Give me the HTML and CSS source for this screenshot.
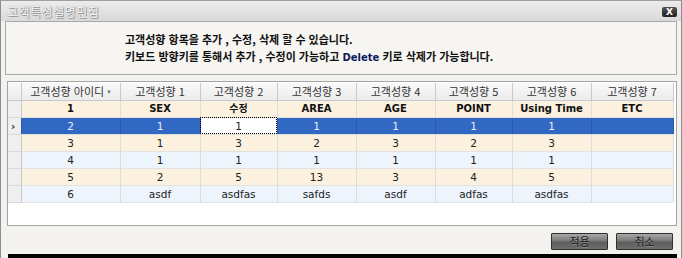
FILE: index.html
```html
<!DOCTYPE html>
<html lang="ko">
<head>
<meta charset="utf-8">
<link rel="stylesheet" href="styles.css">
</head>
<body>
<div class="window">
  <div class="titlebar">
    <span class="title">고객특성설명편집</span>
    <span class="close">X</span>
  </div>
  <div class="content">
    <div class="info">
      <p>고객성향 항목을 추가 , 수정, 삭제 할 수 있습니다.</p>
      <p>키보드 방향키를 통해서 추가 , 수정이 가능하고 <span class="kw">Delete</span> 키로 삭제가 가능합니다.</p>
    </div>
    <div class="grid">
      <table>
        <colgroup>
          <col class="c-rh"><col class="c0"><col class="c1"><col class="c2"><col class="c3"><col class="c4"><col class="c5"><col class="c6"><col class="c7">
        </colgroup>
        <thead>
          <tr>
            <th class="rh"></th>
            <th>고객성향 아이디 <span class="sort">▾</span></th>
            <th>고객성향 1</th>
            <th>고객성향 2</th>
            <th>고객성향 3</th>
            <th>고객성향 4</th>
            <th>고객성향 5</th>
            <th>고객성향 6</th>
            <th>고객성향 7</th>
          </tr>
        </thead>
        <tbody>
          <tr class="beige bold">
            <td class="rh"></td><td>1</td><td>SEX</td><td>수정</td><td>AREA</td><td>AGE</td><td>POINT</td><td>Using Time</td><td>ETC</td>
          </tr>
          <tr class="sel">
            <td class="rh">›</td><td>2</td><td>1</td><td class="focus">1</td><td>1</td><td>1</td><td>1</td><td>1</td><td></td>
          </tr>
          <tr class="beige">
            <td class="rh"></td><td>3</td><td>1</td><td>3</td><td>2</td><td>3</td><td>2</td><td>3</td><td></td>
          </tr>
          <tr class="blue">
            <td class="rh"></td><td>4</td><td>1</td><td>1</td><td>1</td><td>1</td><td>1</td><td>1</td><td></td>
          </tr>
          <tr class="beige">
            <td class="rh"></td><td>5</td><td>2</td><td>5</td><td>13</td><td>3</td><td>4</td><td>5</td><td></td>
          </tr>
          <tr class="blue">
            <td class="rh"></td><td>6</td><td>asdf</td><td>asdfas</td><td>safds</td><td>asdf</td><td>adfas</td><td>asdfas</td><td></td>
          </tr>
        </tbody>
      </table>
    </div>
    <div class="footer">
      <button class="btn">적용</button>
      <button class="btn">취소</button>
    </div>
  </div>
  <div class="bottombar"></div>
</div>
</body>
</html>
```

FILE: styles.css
```css
* { box-sizing: border-box; }
html, body { margin: 0; padding: 0; }
body {
  width: 682px;
  height: 258px;
  overflow: hidden;
  font-family: "Noto Sans CJK KR", "DejaVu Sans", sans-serif;
  font-size: 11px;
  color: #222;
  background: #f3f2ef;
}
.window {
  width: 682px;
  height: 258px;
  display: flex;
  flex-direction: column;
  background: #f3f2ef;
  border-left: 1px solid #8d8d8d;
  border-right: 1px solid #8d8d8d;
  border-top: 1px solid #a0a0a0;
}
.titlebar {
  height: 20px;
  flex: none;
  display: flex;
  align-items: center;
  justify-content: space-between;
  padding: 0 4px 0 6px;
  background: linear-gradient(#ececec, #d9d9d9);
}
.title {
  font-size: 12px;
  color: #fbfbfb;
  letter-spacing: 0.5px;
  text-shadow: 0 0 1px #6f6f6f, 1px 1px 0 #9a9a9a;
}
.close {
  width: 15px;
  height: 10px;
  background: linear-gradient(#555, #222);
  border-radius: 2px;
  color: #fff;
  font-family: "DejaVu Sans", sans-serif;
  font-weight: bold;
  font-size: 9px;
  line-height: 10px;
  text-align: center;
  margin-top: 2px;
}
.content {
  flex: 1;
  display: flex;
  flex-direction: column;
  padding: 0 4px 0 4px;
}
.info {
  height: 54px;
  flex: none;
  border: 1px solid #a9a9a9;
  background: #f6f5f2;
  padding: 9px 0 0 119px;
}
.info p {
  margin: 0;
  height: 17px;
  line-height: 17px;
  font-weight: bold;
  font-size: 11px;
  color: #111;
}
.kw {
  color: #0d1a5c;
  font-family: "DejaVu Sans", sans-serif;
  font-size: 10px;
}
.grid {
  flex: none;
  height: 145px;
  margin: 6px 0 0 2px;
  border: 1px solid #a4a4a4;
  background: #fff;
  padding-top: 1px;
}
table {
  border-collapse: collapse;
  table-layout: fixed;
  width: 665px;
}
.c-rh { width: 13px; }
.c0 { width: 99px; }
.c1 { width: 80px; }
.c2 { width: 77px; }
.c3 { width: 79px; }
.c4 { width: 79px; }
.c5 { width: 77px; }
.c6 { width: 79px; }
.c7 { width: 82px; }
th, td {
  height: 17px;
  padding: 0;
  text-align: center;
  white-space: nowrap;
  overflow: hidden;
  line-height: 16px;
}
th {
  font-weight: normal;
  color: #333;
  background: linear-gradient(#f9f9f9, #ebebeb);
  border: 1px solid #c9c9c9;
  border-top: none;
}
th.rh { border-left: none; }
.sort { font-size: 7px; color: #777; vertical-align: 2px; }
td {
  font-family: "DejaVu Sans", "Noto Sans CJK KR", sans-serif;
  font-size: 10.5px;
  color: #222;
  border-right: 1px solid #dcdcdc;
  border-bottom: 1px solid #e2e2e2;
}
td.rh {
  background: #efefef;
  border-right: 1px solid #c9c9c9;
  border-bottom: 1px solid #d8d8d8;
  font-weight: bold;
  color: #333;
  text-align: left;
  padding-left: 3px;
}
tr.beige td { background: #fbf1de; }
tr.blue td { background: #edf4fb; }
tr.beige td.rh, tr.blue td.rh { background: #efefef; }
tr.bold td { font-weight: bold; color: #111; font-size: 10px; }
tr.sel td { background: #3168c3; color: #e8eef8; border-right-color: #2b5aa6; border-bottom-color: #dcdcdc; }
tr.sel td.rh { background: #efefef; color: #333; }
tr.sel td.focus {
  background: #fff;
  color: #222;
  outline: 1px dotted #000;
  outline-offset: -1px;
}
.footer {
  flex: 1;
  display: flex;
  justify-content: flex-end;
  align-items: flex-start;
  gap: 8px;
  padding: 7px 4px 0 0;
}
.btn {
  width: 57px;
  height: 17px;
  padding: 0;
  border: 1px solid #2e2e2e;
  border-radius: 1px;
  background: linear-gradient(#a8a8a8 0%, #7a7a7a 45%, #5e5e5e 55%, #6e6e6e 100%);
  color: #1e1e1e;
  font-family: "Noto Sans CJK KR", sans-serif;
  font-size: 11px;
  line-height: 15px;
  text-shadow: 0 1px 0 rgba(255,255,255,0.25);
}
.bottombar {
  flex: none;
  height: 4px;
  margin: 0 4px 0 7px;
  background: #000;
}
```
